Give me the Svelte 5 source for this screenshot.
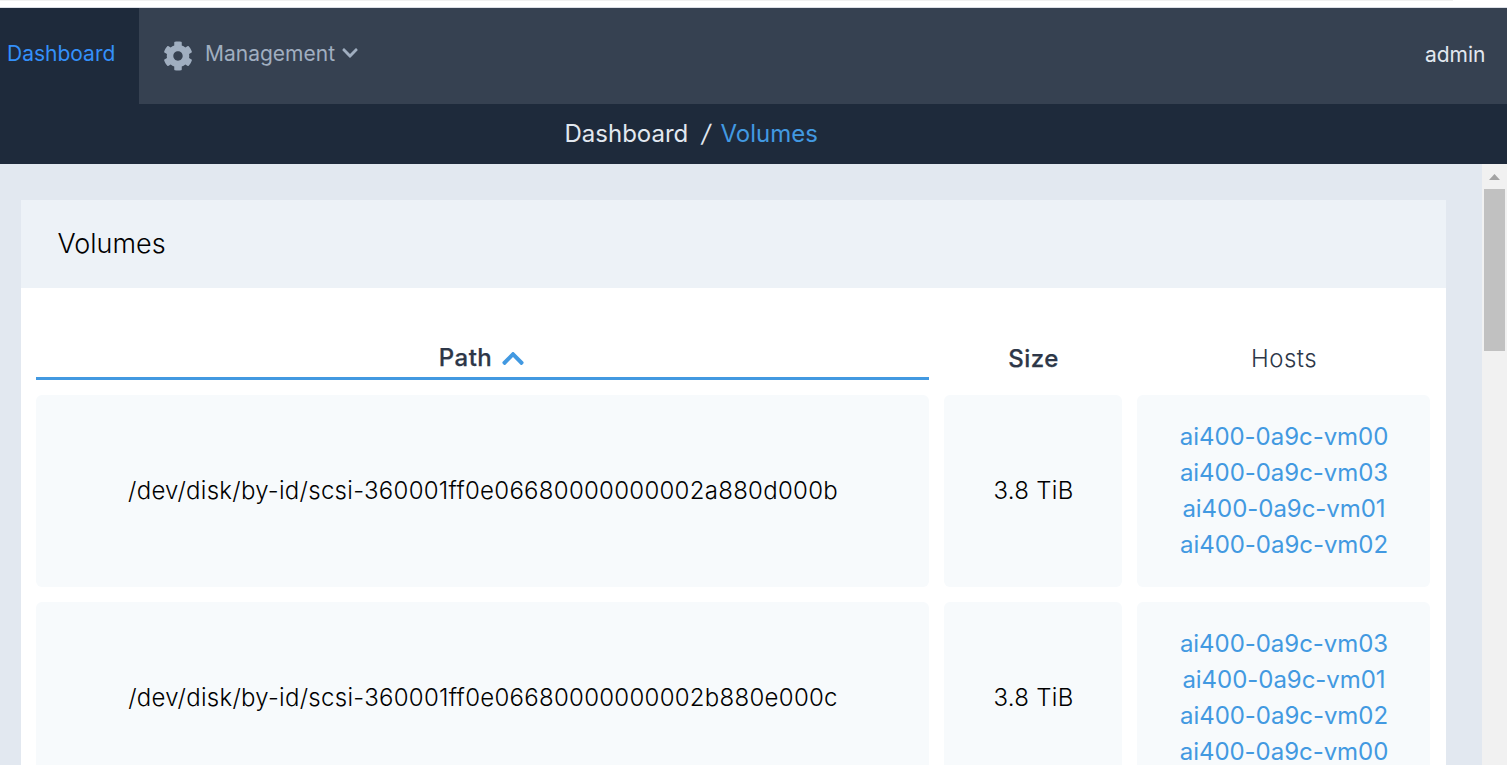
<script>
  const volumes = [
    {
      path: '/dev/disk/by-id/scsi-360001ff0e06680000000002a880d000b',
      size: '3.8 TiB',
      hosts: ['ai400-0a9c-vm00', 'ai400-0a9c-vm03', 'ai400-0a9c-vm01', 'ai400-0a9c-vm02']
    },
    {
      path: '/dev/disk/by-id/scsi-360001ff0e06680000000002b880e000c',
      size: '3.8 TiB',
      hosts: ['ai400-0a9c-vm03', 'ai400-0a9c-vm01', 'ai400-0a9c-vm02', 'ai400-0a9c-vm00']
    }
  ];
</script>

<div class="app">
  <div class="chrome"><div class="rule"></div></div>
  <nav>
    <a class="tab active"><span>Dashboard</span></a>
    <a class="tab menu">
      <svg class="gear" viewBox="0 0 512 512"><path d="M487.4 315.7l-42.6-24.6c4.3-23.2 4.3-47 0-70.2l42.6-24.6c4.9-2.8 7.1-8.6 5.5-14-11.1-35.6-30-67.8-54.7-94.6-3.8-4.1-10-5.1-14.8-2.3L380.8 110c-17.9-15.4-38.5-27.3-60.8-35.1V25.8c0-5.6-3.9-10.5-9.4-11.7-36.7-8.2-74.3-7.8-109.2 0-5.5 1.2-9.4 6.1-9.4 11.7V75c-22.2 7.9-42.8 19.8-60.8 35.1L88.7 85.5c-4.9-2.8-11-1.9-14.8 2.3-24.7 26.7-43.6 58.9-54.7 94.6-1.7 5.4.6 11.2 5.5 14L67.3 221c-4.3 23.2-4.3 47 0 70.2l-42.6 24.6c-4.9 2.8-7.1 8.6-5.5 14 11.1 35.6 30 67.8 54.7 94.6 3.8 4.1 10 5.1 14.8 2.3l42.6-24.6c17.9 15.4 38.5 27.3 60.8 35.1v49.2c0 5.6 3.9 10.5 9.4 11.7 36.7 8.2 74.3 7.8 109.2 0 5.5-1.2 9.4-6.1 9.4-11.7v-49.2c22.2-7.9 42.8-19.8 60.8-35.1l42.6 24.6c4.9 2.8 11 1.9 14.8-2.3 24.7-26.7 43.6-58.9 54.7-94.6 1.5-5.5-.7-11.3-5.6-14.1zM256 336c-44.1 0-80-35.9-80-80s35.9-80 80-80 80 35.9 80 80-35.9 80-80 80z" /></svg>
      <span>Management</span>
      <svg class="down" viewBox="0 0 448 512"><path d="M207.029 381.476L12.686 187.132c-9.373-9.373-9.373-24.569 0-33.941l22.667-22.667c9.357-9.357 24.522-9.375 33.901-.04L224 284.505l154.745-154.021c9.379-9.335 24.544-9.317 33.901.04l22.667 22.667c9.373 9.373 9.373 24.569 0 33.941L240.971 381.476c-9.373 9.372-24.569 9.372-33.942 0z" /></svg>
    </a>
    <a class="user">admin</a>
  </nav>
  <div class="crumbs">
    <span>Dashboard</span><span class="slash">/</span><span class="current">Volumes</span>
  </div>
  <div class="body">
    <main>
      <section class="card">
        <h1>Volumes</h1>
        <div class="grid">
          <div class="head sorted">
            <span>Path</span>
            <svg viewBox="0 0 448 512"><path d="M240.971 130.524l194.343 194.343c9.373 9.373 9.373 24.569 0 33.941l-22.667 22.667c-9.357 9.357-24.522 9.375-33.901.04L224 227.495 69.255 381.516c-9.379 9.335-24.544 9.317-33.901-.04l-22.667-22.667c-9.373-9.373-9.373-24.569 0-33.941L207.03 130.525c9.372-9.373 24.568-9.373 33.941-.001z" /></svg>
          </div>
          <div class="head">Size</div>
          <div class="head plain">Hosts</div>
          {#each volumes as v}
            <div class="cell">{v.path}</div>
            <div class="cell">{v.size}</div>
            <div class="cell hosts">
              {#each v.hosts as h}<a>{h}</a>{/each}
            </div>
          {/each}
        </div>
      </section>
    </main>
    <div class="scrollbar">
      <svg viewBox="0 0 11 6"><path d="M5.5 0 L11 6 H0 Z" /></svg>
      <div class="thumb"></div>
    </div>
  </div>
</div>

<style>
  :global(body) { margin: 0; overflow: hidden; }
  .app {
    width: 1507px; height: 765px; overflow: hidden;
    display: flex; flex-direction: column;
    font-family: Inter, sans-serif; font-weight: 400; font-size: 24px; line-height: 36px;
    color: #000; background: #e2e8f0;
  }
  .chrome { flex: none; box-sizing: border-box; height: 8px; background: #fff; border-bottom: 1px solid #dcdfe6; }
  .rule { width: 1453px; height: 1px; background: #f0f0f0; }
  nav {
    flex: none; height: 96px; display: flex; background: #364151;
    font-size: 21px; color: #a0aec0;
  }
  .tab { display: flex; box-sizing: border-box; padding-top: 28px; }
  .active { width: 139px; padding-left: 7px; background: #1e2a3b; color: #3490fa; }
  .menu { padding-left: 24px; }
  .gear { width: 30px; height: 30px; margin: 5px 12px 0 0; }
  .down { width: 16px; height: 18px; margin: 8px 0 0 7px; }
  svg { display: block; fill: currentColor; }
  .user { margin-left: auto; padding: 29px 21.5px 0 0; color: #e2e8f0; }
  .crumbs {
    flex: none; height: 60px; display: flex; align-items: center; box-sizing: border-box;
    padding-left: 564.5px; background: #1e2a3b; color: #e2e8f0;
  }
  .slash { margin: 0 9.5px 0 14px; transform: skewX(-10deg); }
  .current { color: #4299e1; }
  .body { flex: 1; min-height: 0; display: flex; }
  main { flex: 1; padding: 36px 36px 0 21px; overflow: hidden; }
  .card { background: #fff; }
  h1 {
    margin: 0; height: 88px; padding-left: 36.5px; background: #edf2f7;
    font-size: 27px; font-weight: 300; line-height: 88px;
  }
  .grid {
    display: grid; grid-template-columns: 893px 178px 293px; gap: 15px; padding: 49px 15px 15px;
  }
  .head {
    box-sizing: border-box; height: 43px; padding: 4px 0 0 1px; text-align: center;
    font-weight: 500; letter-spacing: 0.5px; color: #2d3748; -webkit-text-stroke: 0.25px #2d3748;
  }
  .plain { font-weight: 300; -webkit-text-stroke: 0; }
  .sorted { display: flex; justify-content: center; padding: 3px 2px 0 0; border-bottom: 3px solid #4299e1; }
  .sorted svg { width: 22px; height: 25px; margin: 6px 0 0 10px; color: #4299e1; }
  .cell {
    height: 192px; display: flex; flex-direction: column; align-items: center; justify-content: center;
    box-sizing: border-box; padding-left: 1px; border-radius: 6px; background: #f7fafc;
    font-weight: 300; letter-spacing: 0.28px;
  }
  .hosts { color: #4299e1; font-weight: 400; letter-spacing: -0.04px; }
  .scrollbar { width: 25px; background: #f1f1f1; }
  .scrollbar svg { width: 11px; height: 6px; margin: 10px 0 9px 7px; fill: #a3a3a3; }
  .thumb { width: 21px; height: 162px; margin-left: 2px; background: #c1c1c1; }
</style>
